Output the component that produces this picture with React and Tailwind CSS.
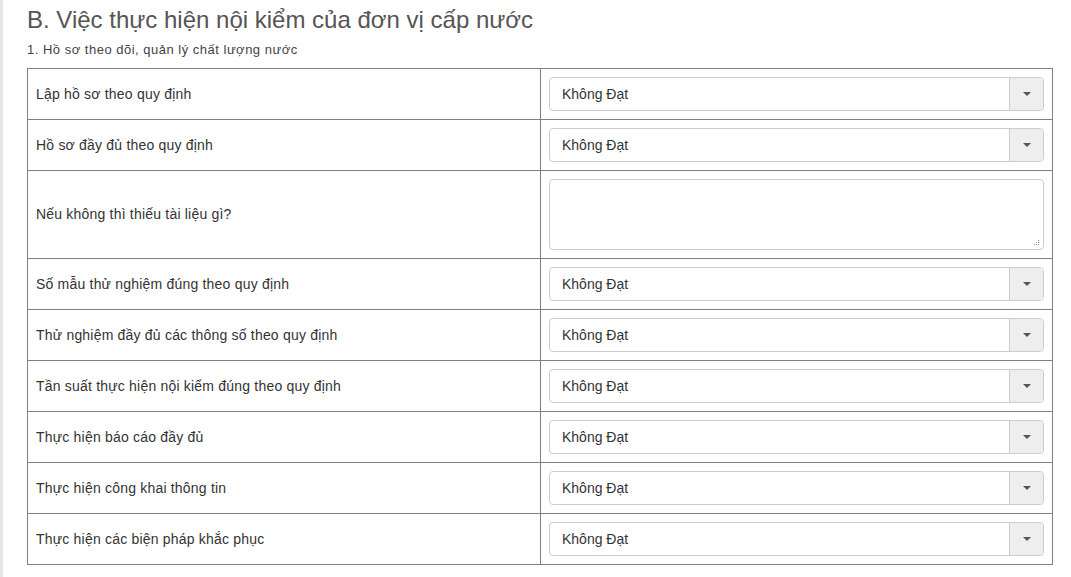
import React from 'react';

const rows = [
  { label: 'Lập hồ sơ theo quy định', type: 'select' },
  { label: 'Hồ sơ đầy đủ theo quy định', type: 'select' },
  { label: 'Nếu không thì thiếu tài liệu gì?', type: 'textarea' },
  { label: 'Số mẫu thử nghiệm đúng theo quy định', type: 'select' },
  { label: 'Thử nghiệm đầy đủ các thông số theo quy định', type: 'select' },
  { label: 'Tần suất thực hiện nội kiểm đúng theo quy định', type: 'select' },
  { label: 'Thực hiện báo cáo đầy đủ', type: 'select' },
  { label: 'Thực hiện công khai thông tin', type: 'select' },
  { label: 'Thực hiện các biện pháp khắc phục', type: 'select' },
];

function FakeSelect() {
  return (
    <div className="flex h-[34px] border border-[#ccc] rounded-[4px] bg-white overflow-hidden">
      <div className="flex-1 flex items-center pl-3 text-[14px] text-[#333]">Không Đạt</div>
      <div className="w-[34px] border-l border-[#ccc] bg-[#eee] flex items-center justify-center">
        <span className="block w-0 h-0 border-l-[4px] border-r-[4px] border-t-[4px] border-l-transparent border-r-transparent border-t-[#555]"></span>
      </div>
    </div>
  );
}

export default function App() {
  return (
    <div className="min-h-[577px] bg-white border-l-[3px] border-[#e6e6e6] font-['Liberation_Sans',Arial,sans-serif]">
      <div className="pl-[24px] pr-[18px] pt-[5px]">
        <h3 className="text-[24px] leading-[30px] text-[#555]">B. Việc thực hiện nội kiểm của đơn vị cấp nước</h3>
        <p className="text-[13px] leading-[16px] tracking-[0.5px] text-[#444] mt-[7px] mb-[10px]">1. Hồ sơ theo dõi, quản lý chất lượng nước</p>

        {/* bảng tiêu chí */}
        <table className="w-[1026px] border-collapse border border-[#808080]">
          <tbody>
            {rows.map((r, i) => (
              <tr key={i} className="border-b border-[#808080]">
                <td className="w-[513px] border-r border-[#808080] px-[8px] text-[14px] tracking-[0.2px] text-[#333] align-middle">{r.label}</td>
                <td className="p-[8px]">
                  {r.type === 'select' ? (
                    <FakeSelect />
                  ) : (
                    <div className="relative h-[71px] border border-[#ccc] rounded-[4px] bg-white">
                      <svg className="absolute right-[3px] bottom-[3px]" width="7" height="7" viewBox="0 0 7 7">
                        <rect x="5" y="1" width="1" height="1" fill="#999" />
                        <rect x="3" y="3" width="1" height="1" fill="#999" />
                        <rect x="5" y="3" width="1" height="1" fill="#999" />
                        <rect x="1" y="5" width="1" height="1" fill="#999" />
                        <rect x="3" y="5" width="1" height="1" fill="#999" />
                        <rect x="5" y="5" width="1" height="1" fill="#999" />
                      </svg>
                    </div>
                  )}
                </td>
              </tr>
            ))}
          </tbody>
        </table>
      </div>
    </div>
  );
}
